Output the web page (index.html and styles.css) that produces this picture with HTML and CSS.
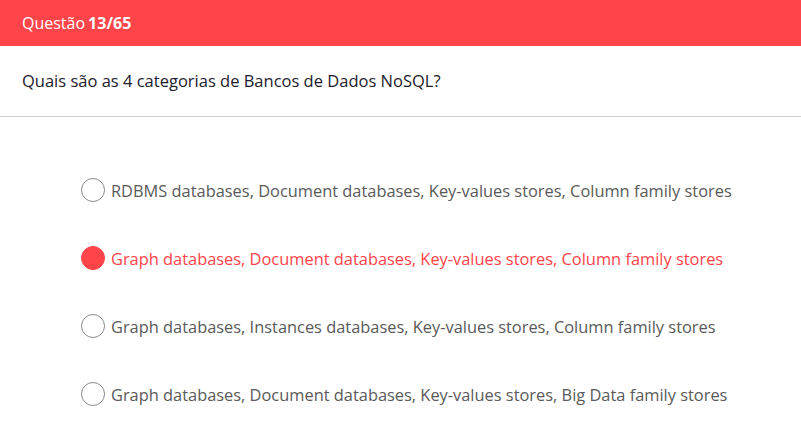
FILE: index.html
```html
<!DOCTYPE html>
<html lang="pt">
<head>
<meta charset="utf-8">
<link rel="stylesheet" href="styles.css">
</head>
<body>
<div class="header">Questão <b>13/65</b></div>
<div class="question">Quais são as 4 categorias de Bancos de Dados NoSQL?</div>
<ul class="options">
  <li class="option"><span class="radio"></span><span class="label">RDBMS databases, Document databases, Key-values stores, Column family stores</span></li>
  <li class="option selected"><span class="radio"></span><span class="label">Graph databases, Document databases, Key-values stores, Column family stores</span></li>
  <li class="option"><span class="radio"></span><span class="label">Graph databases, Instances databases, Key-values stores, Column family stores</span></li>
  <li class="option"><span class="radio"></span><span class="label">Graph databases, Document databases, Key-values stores, Big Data family stores</span></li>
</ul>
</body>
</html>
```
FILE: styles.css
```css
* { box-sizing: border-box; }
html, body { margin: 0; padding: 0; background: #fff; }
body { font-family: "Open Sans", "Noto Sans", sans-serif; width: 801px; height: 437px; overflow: hidden; }
.header {
  height: 46px;
  background: #ff444a;
  color: #fff;
  font-size: 16px;
  padding: 0 22px;
  display: flex;
  align-items: center;
}
.header b { font-weight: 700; margin-left: 3px; }
.question {
  height: 71px;
  border-bottom: 1px solid #cfcfcf;
  padding: 0 22px 2px;
  display: flex;
  align-items: center;
  font-size: 16.5px;
  color: #1c1a2c;
}
.options {
  list-style: none;
  margin: 0;
  padding: 61px 0 0 81px;
  display: flex;
  flex-direction: column;
  gap: 44px;
}
.option {
  display: flex;
  align-items: center;
  gap: 6px;
  height: 24px;
  font-size: 16.4px;
  color: #5a5a5a;
}
.radio {
  width: 24px;
  height: 24px;
  border-radius: 50%;
  border: 1px solid #8a8a8a;
  flex: none;
}
.selected { color: #ff444a; }
.selected .radio { background: #ff444a; border-color: #ff444a; }
```
